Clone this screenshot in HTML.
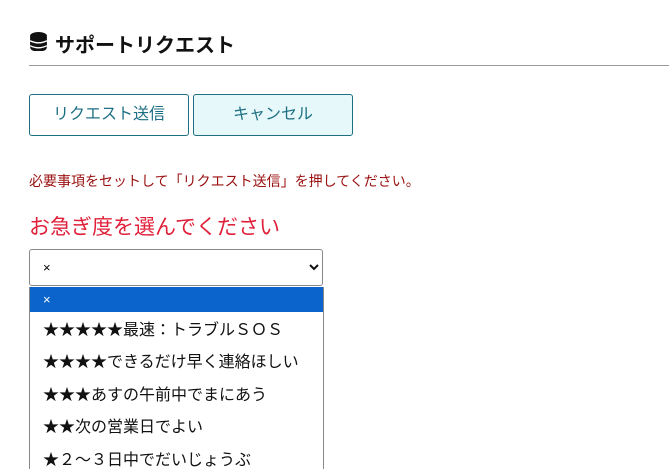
<!DOCTYPE html>
<html><head><meta charset="utf-8"><style>
html,body{margin:0;width:669px;height:469px;overflow:hidden}
body{background:#fff;font-family:"Liberation Sans","Noto Sans CJK JP",sans-serif;position:relative}
.h{position:absolute;left:55px;top:29px;font-size:20px;font-weight:bold;color:#111}
.hr{position:absolute;left:29px;right:0;top:65px;height:1px;background:#999}
.b{position:absolute;top:94px;width:158px;height:40px;border:1px solid #1d6f84;border-radius:3px;color:#1d6f84;font-size:16px;text-align:center;line-height:40px}
.m{position:absolute;left:29px;top:171px;font-size:14px;color:#9a1010}
.t{position:absolute;left:29px;top:211px;font-size:21px;color:#e0203a}
.s{position:absolute;left:29px;top:249px;width:292px;height:35px;border:1px solid #888;border-radius:3px;font-size:13px}
.l{position:absolute;left:29px;top:287px;width:293px;height:200px;border:1px solid #888;border-top:none;font-size:16px;color:#111}
.l div{height:32.4px;line-height:32.4px;padding-left:13px}
</style></head><body>
<svg style="position:absolute;left:30px;top:32px" width="17" height="20" viewBox="0 0 16 19"><rect x="0" y="1" width="16" height="17" rx="4" fill="#111"/><ellipse cx="8" cy="3.5" rx="8" ry="3.5" fill="#111"/><path d="M0 8.3q8 4 16 0M0 13q8 4 16 0" stroke="#fff" stroke-width="1.3" fill="none"/></svg>
<div class="h">サポートリクエスト</div>
<div class="hr"></div>
<div class="b" style="left:29px">リクエスト送信</div>
<div class="b" style="left:193px;background:#e6f8f9">キャンセル</div>
<div class="m">必要事項をセットして「リクエスト送信」を押してください。</div>
<div class="t">お急ぎ度を選んでください</div>
<div class="s"><span style="position:absolute;left:13px;top:10px">×</span><svg style="position:absolute;right:3px;top:13px" width="10" height="8" viewBox="0 0 10 8"><path d="M1 2l4 4 4-4" stroke="#111" stroke-width="2" fill="none"/></svg></div>
<div class="l">
<div style="background:#0a64cc;color:#fff;height:25px;line-height:25px;font-size:13px">×</div>
<div style="padding-top:3px">★★★★★最速：トラブルＳＯＳ</div>
<div>★★★★できるだけ早く連絡ほしい</div>
<div>★★★あすの午前中でまにあう</div>
<div>★★次の営業日でよい</div>
<div>★２～３日中でだいじょうぶ</div>
</div>
</body></html>
